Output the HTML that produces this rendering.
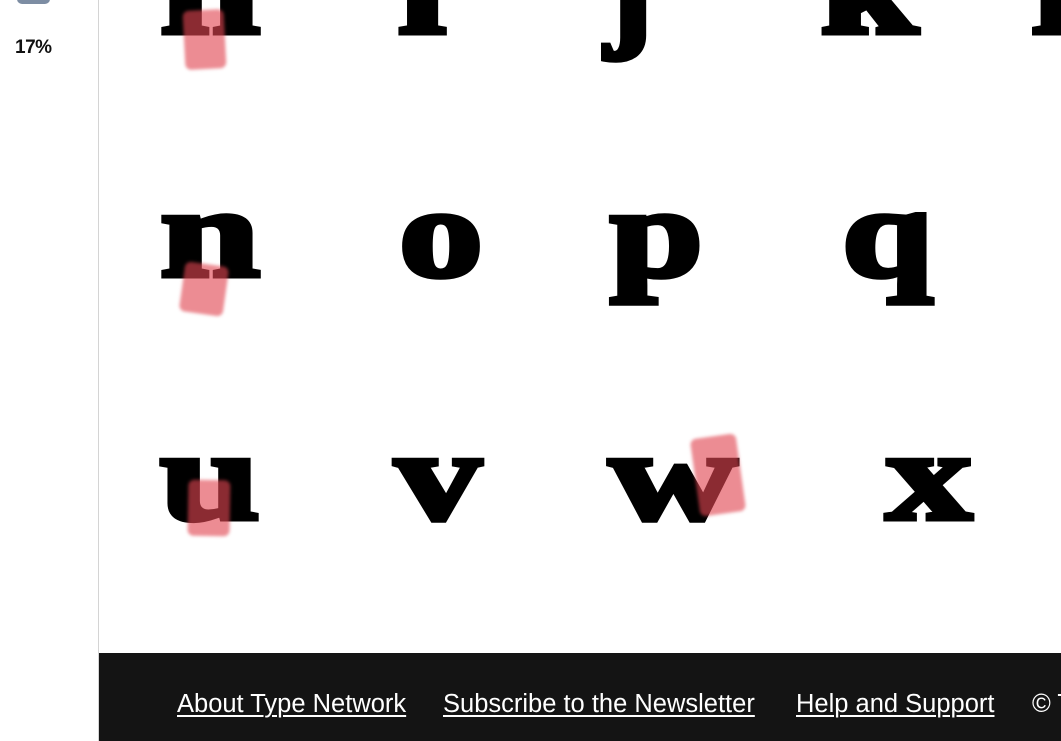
<!DOCTYPE html>
<html><head><meta charset="utf-8"><style>
html,body{margin:0;padding:0;width:1061px;height:741px;overflow:hidden;background:#fff;font-family:"Liberation Sans",sans-serif}
.side{position:absolute;left:0;top:0;width:98px;height:741px;border-right:1.5px solid #d4d4d4;background:#fff}
.pill{position:absolute;left:17px;top:-8px;width:33px;height:12px;border-radius:5px;background:#7d8da3}
.pct{position:absolute;left:15px;top:37px;font-weight:bold;font-size:19px;color:#111;letter-spacing:-0.5px}
.blot{position:absolute;background:rgba(225,70,80,0.62);border-radius:6px;filter:blur(1.5px)}
footer{position:absolute;left:99px;top:653px;width:962px;height:88px;background:#141414;color:#fff;font-size:25.5px;white-space:nowrap;overflow:hidden}
footer span{position:absolute;top:37px;text-decoration:underline;text-underline-offset:3px;text-decoration-thickness:1.5px}
</style></head><body>
<div class="side"><div class="pill"></div><div class="pct">17%</div></div>
<svg width="1061" height="653" style="position:absolute;left:0;top:0" font-family="Liberation Serif,serif" font-weight="bold" font-size="128" fill="#000" stroke="#000" stroke-width="5" stroke-linejoin="miter">
<text x="160" y="33" textLength="100" lengthAdjust="spacingAndGlyphs">h</text>
<text x="398" y="33" textLength="48" lengthAdjust="spacingAndGlyphs">i</text>
<text x="605" y="33" textLength="48" lengthAdjust="spacingAndGlyphs">j</text>
<text x="820" y="33" textLength="98" lengthAdjust="spacingAndGlyphs">k</text>
<text x="1032" y="33" textLength="48" lengthAdjust="spacingAndGlyphs">l</text>
<text x="160" y="276" textLength="100" lengthAdjust="spacingAndGlyphs">n</text>
<text x="399" y="276" textLength="84" lengthAdjust="spacingAndGlyphs">o</text>
<text x="610" y="276" textLength="93" lengthAdjust="spacingAndGlyphs">p</text>
<text x="842" y="276" textLength="91" lengthAdjust="spacingAndGlyphs">q</text>
<text x="160" y="519" textLength="100" lengthAdjust="spacingAndGlyphs">u</text>
<text x="395" y="519" textLength="86" lengthAdjust="spacingAndGlyphs">v</text>
<text x="609" y="519" textLength="128" lengthAdjust="spacingAndGlyphs">w</text>
<text x="886" y="519" textLength="86" lengthAdjust="spacingAndGlyphs">x</text>
</svg>
<div class="blot" style="left:184px;top:10px;width:41px;height:59px;transform:rotate(-3deg)"></div>
<div class="blot" style="left:182px;top:264px;width:44px;height:50px;transform:rotate(8deg)"></div>
<div class="blot" style="left:188px;top:480px;width:42px;height:56px;transform:rotate(1deg)"></div>
<div class="blot" style="left:695px;top:436px;width:46px;height:78px;transform:rotate(-8deg)"></div>
<footer>
<span style="left:78px">About Type Network</span>
<span style="left:344px">Subscribe to the Newsletter</span>
<span style="left:697px">Help and Support</span>
<span style="left:933px;text-decoration:none">© Type Network</span>
</footer>
</body></html>
